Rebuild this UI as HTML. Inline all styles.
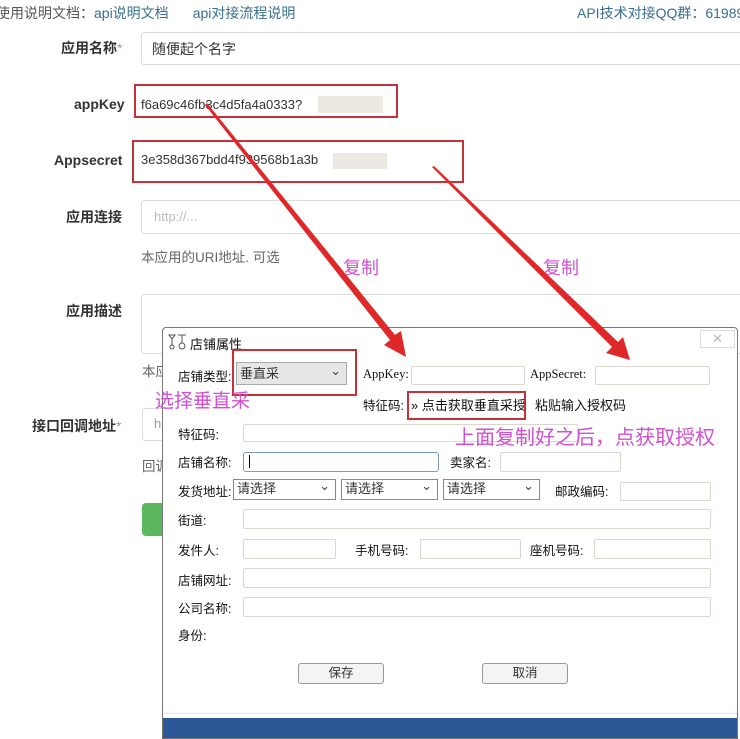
<!DOCTYPE html>
<html><head><meta charset="utf-8"><style>
*{margin:0;padding:0;box-sizing:border-box}
body{width:740px;height:739px;overflow:hidden;background:#fff;position:relative;font-family:"Liberation Sans","Noto Sans CJK SC",sans-serif;color:#333}
.a{position:absolute;white-space:nowrap}
.lb{font-weight:bold;font-size:14px;color:#333}
.in{position:absolute;border:1px solid #ddd;border-radius:3px;background:#fff}
.d{font-size:12.5px;color:#111;margin-top:-3px}
.di{position:absolute;border:1px solid #ddd6cc;border-radius:2px;background:#fff}
.sel{position:absolute;border:1px solid #888;background:#fff;font-size:13px;padding-left:3px;line-height:18px}
.sel:after{content:"⌄";position:absolute;right:5px;top:-3px;font-size:13px;color:#444}
.rb{position:absolute;border:2px solid #c8303a}
.mg{color:#d050d0;font-size:19px}
.btn{position:absolute;border:1px solid #999;border-radius:3px;background:#f4f4f4;font-size:12.5px;text-align:center;line-height:18px}
</style></head><body>
<div class="a" style="left:-4px;top:3px;font-size:14px;color:#555">使用说明文档：<span style="color:#3a6f8f">api说明文档</span><span style="color:#3a6f8f;margin-left:24px">api对接流程说明</span></div>
<div class="a" style="left:577px;top:3px;font-size:14px;color:#3a6f8f">API技术对接QQ群：61989</div>

<div class="a lb" style="left:61px;top:38px">应用名称<span style="color:#999;font-weight:normal">*</span></div>
<div class="in" style="left:141px;top:32px;width:610px;height:33px"></div>
<div class="a" style="left:152px;top:39px;font-size:14px;color:#333">随便起个名字</div>

<div class="a lb" style="left:74px;top:96px">appKey</div>
<div class="a" style="left:141px;top:97px;font-size:13px">f6a69c46fb3c4d5fa4a0333?</div>
<div class="a" style="left:318px;top:96px;width:65px;height:17px;background:#ece9e2"></div>
<div class="rb" style="left:134px;top:84px;width:264px;height:34px"></div>

<div class="a lb" style="left:54px;top:152px">Appsecret</div>
<div class="a" style="left:141px;top:152px;font-size:13px">3e358d367bdd4f939568b1a3b</div>
<div class="a" style="left:333px;top:153px;width:54px;height:16px;background:#ece9e2"></div>
<div class="rb" style="left:132px;top:140px;width:332px;height:43px"></div>

<div class="a lb" style="left:66px;top:207px">应用连接</div>
<div class="in" style="left:141px;top:200px;width:610px;height:34px"></div>
<div class="a" style="left:154px;top:209px;font-size:13px;color:#bbb">http://...</div>
<div class="a" style="left:141px;top:246px;font-size:13.5px;color:#666">本应用的URI地址. 可选</div>
<div class="a mg" style="left:343px;top:254px;font-size:18px">复制</div>
<div class="a mg" style="left:543px;top:254px;font-size:18px">复制</div>

<div class="a lb" style="left:66px;top:301px">应用描述</div>
<div class="in" style="left:141px;top:294px;width:610px;height:60px"></div>
<div class="a" style="left:142px;top:360px;font-size:13.5px;color:#666">本应</div>
<div class="a lb" style="left:32px;top:416px">接口回调地址<span style="color:#999;font-weight:normal">*</span></div>
<div class="in" style="left:142px;top:408px;width:40px;height:33px"></div>
<div class="a" style="left:154px;top:416px;font-size:13px;color:#999">h</div>
<div class="a" style="left:142px;top:455px;font-size:13.5px;color:#666">回调</div>
<div class="a" style="left:142px;top:503px;width:30px;height:33px;background:#5cb85c;border-radius:4px"></div>

<!-- dialog -->
<div class="a" style="left:162px;top:327px;width:576px;height:412px;background:#fff;border:1px solid #777;border-radius:4px 4px 0 0;overflow:hidden">
<div class="a" style="left:0;top:390px;width:576px;height:22px;background:#2b5797"></div>
<div class="a" style="left:0;top:385px;width:576px;height:1px;background:#e5e5e5"></div>
</div>
<svg class="a" style="left:167px;top:333px" width="22" height="18" viewBox="0 0 22 18"><g fill="none" stroke="#555" stroke-width="1"><path d="M2 2h6l-3 4z"/><path d="M5 6v6"/><circle cx="5" cy="14" r="2"/><path d="M11 2h8M15 2v8"/><circle cx="15" cy="13" r="3"/></g></svg>
<div class="a d" style="left:190px;top:337px;font-size:13px">店铺属性</div>
<div class="a" style="left:700px;top:330px;width:35px;height:18px;border:1px solid #ddd;color:#bbb;text-align:center;font-size:13px;line-height:16px">✕</div>

<div class="a d" style="left:178px;top:369px">店铺类型:</div>
<div class="sel" style="left:236px;top:362px;width:111px;height:23px;background:#e6e6e6;border-color:#aaa;line-height:21px">垂直采</div>
<div class="rb" style="left:232px;top:349px;width:125px;height:47px"></div>
<div class="a mg" style="left:155px;top:386px">选择垂直采</div>
<div class="a d" style="left:363px;top:370px;font-family:'Liberation Serif',serif">AppKey:</div>
<div class="di" style="left:411px;top:366px;width:114px;height:19px"></div>
<div class="a d" style="left:530px;top:370px;font-family:'Liberation Serif',serif">AppSecret:</div>
<div class="di" style="left:595px;top:366px;width:115px;height:19px"></div>

<div class="a d" style="left:363px;top:398px">特征码:</div>
<div class="a d" style="left:411px;top:398px;font-size:13px">» 点击获取垂直采授</div>
<div class="rb" style="left:407px;top:391px;width:119px;height:29px"></div>
<div class="a d" style="left:535px;top:398px;font-size:13px">粘贴输入授权码</div>

<div class="a d" style="left:178px;top:427px">特征码:</div>
<div class="di" style="left:243px;top:424px;width:335px;height:18px"></div>
<div class="a mg" style="left:455px;top:421px;font-size:20px">上面复制好之后，点获取授权</div>

<div class="a d" style="left:178px;top:455px">店铺名称:</div>
<div class="di" style="left:243px;top:452px;width:196px;height:20px;border-color:#7a9cbf;border-radius:3px"></div>
<div class="a" style="left:249px;top:455px;width:1px;height:13px;background:#000"></div>
<div class="a d" style="left:450px;top:455px">卖家名:</div>
<div class="di" style="left:500px;top:452px;width:121px;height:20px"></div>

<div class="a d" style="left:178px;top:484px">发货地址:</div>
<div class="sel" style="left:233px;top:479px;width:103px;height:21px">请选择</div>
<div class="sel" style="left:341px;top:479px;width:97px;height:21px">请选择</div>
<div class="sel" style="left:443px;top:479px;width:97px;height:21px">请选择</div>
<div class="a d" style="left:555px;top:484px">邮政编码:</div>
<div class="di" style="left:620px;top:482px;width:91px;height:19px"></div>

<div class="a d" style="left:178px;top:513px">街道:</div>
<div class="di" style="left:243px;top:509px;width:468px;height:20px"></div>
<div class="a d" style="left:178px;top:543px">发件人:</div>
<div class="di" style="left:243px;top:539px;width:93px;height:20px"></div>
<div class="a d" style="left:355px;top:543px">手机号码:</div>
<div class="di" style="left:420px;top:539px;width:101px;height:20px"></div>
<div class="a d" style="left:530px;top:543px">座机号码:</div>
<div class="di" style="left:594px;top:539px;width:117px;height:20px"></div>
<div class="a d" style="left:178px;top:573px">店铺网址:</div>
<div class="di" style="left:243px;top:568px;width:468px;height:20px"></div>
<div class="a d" style="left:178px;top:601px">公司名称:</div>
<div class="di" style="left:243px;top:597px;width:468px;height:20px"></div>
<div class="a d" style="left:178px;top:628px">身份:</div>
<div class="btn" style="left:298px;top:663px;width:86px;height:21px">保存</div>
<div class="btn" style="left:482px;top:663px;width:86px;height:21px">取消</div>

<svg class="a" style="left:0;top:0" width="740" height="739">
<polygon points="205,105 207,103 395,335 401,331 406,357 384,345 390,340" fill="#e02828"/>
<polygon points="432,167 434,166 618,342 623,337 630,360 606,353 612,347" fill="#e02828"/>
</svg>
</body></html>
